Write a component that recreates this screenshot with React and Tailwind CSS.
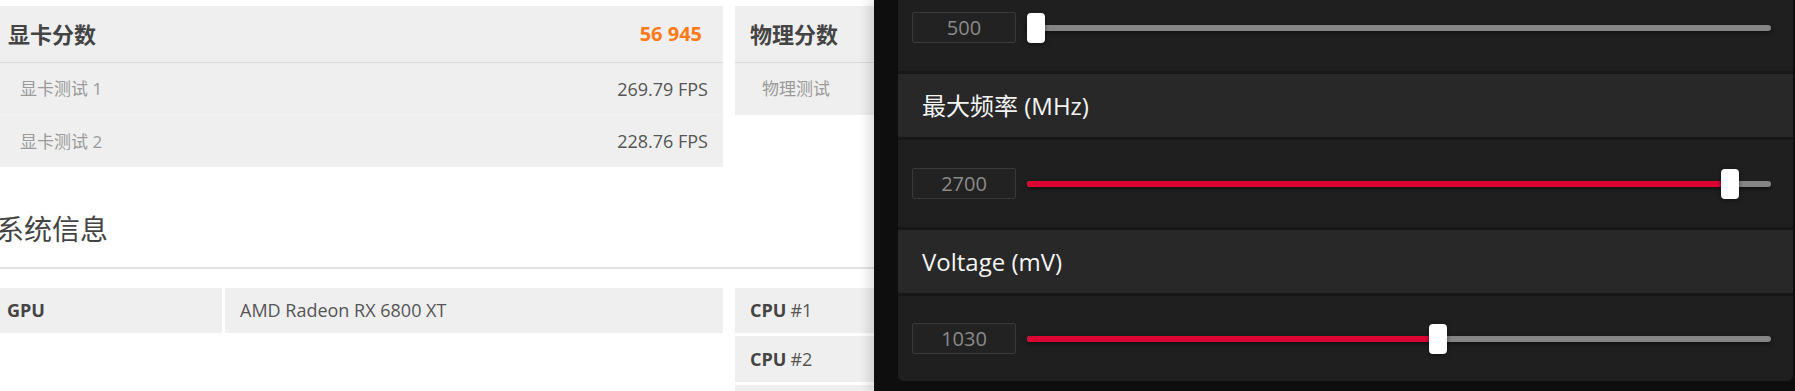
import React from 'react';

const font = { fontFamily: '"Open Sans", "Noto Sans CJK SC", sans-serif' };

const ScoreBox = ({ title, score, rows, width }) => (
  <div className={`${width} shrink-0 bg-[#efefef]`}>
    <div className="h-[57px] flex items-center justify-between pl-[15px] pr-[21px] border-b border-[#d9d9d9]">
      <span className="text-[22px] font-bold text-[#444]">{title}</span>
      {score && <span className="text-[20px] font-bold text-[#ff7a17]">{score}</span>}
    </div>
    {rows.map((r, i) => (
      <div
        key={r.label}
        className={`h-[52px] flex items-center justify-between pl-[27px] pr-[15px] ${i > 0 ? 'border-t border-[#f3f3f3]' : ''}`}
      >
        <span className="text-[17px] text-[#9a9a9a]">{r.label}</span>
        <span className="text-[18px] text-[#555]">{r.value}</span>
      </div>
    ))}
  </div>
);

const Slider = ({ value, frac }) => (
  <div className="h-full flex items-center pl-[14px] pr-[22px] gap-[11px]">
    <div className="w-[104px] h-[31px] shrink-0 flex items-center justify-center border border-[#3a3a3a] bg-[#222] rounded-[2px] text-[20px] text-[#8a8a8a]">
      {value}
    </div>
    <div className="relative flex-1 h-[6px] rounded-full bg-[#858585] shadow-[0_2px_4px_rgba(0,0,0,0.45)]">
      {/* filled part */}
      <div
        className="absolute left-0 top-0 h-full rounded-full bg-[#dc0433]"
        style={{ width: frac > 0 ? `calc((100% - 18px) * ${frac} + 9px)` : 0 }}
      />
      {/* thumb */}
      <div
        className="absolute top-1/2 -translate-y-1/2 w-[18px] h-[30px] rounded-[4px] bg-white shadow-[0_1px_4px_rgba(0,0,0,0.5)]"
        style={{ left: `calc((100% - 18px) * ${frac})` }}
      />
    </div>
  </div>
);

const Header = ({ children }) => (
  <div className="h-[63px] shrink-0 flex items-center pl-[24px] bg-[#282828] text-[24px] text-[#f4f4f4]">
    {children}
  </div>
);

export default function App() {
  return (
    <div className="w-[1795px] h-[391px] overflow-hidden flex bg-white" style={font}>
      {/* result page */}
      <div className="w-[874px] shrink-0 overflow-hidden">
        <div className="-ml-[7px] w-[1200px] pt-[6px]">
          <div className="flex items-start gap-[12px]">
            <ScoreBox
              width="w-[730px]"
              title="显卡分数"
              score="56 945"
              rows={[
                { label: '显卡测试 1', value: '269.79 FPS' },
                { label: '显卡测试 2', value: '228.76 FPS' },
              ]}
            />
            <ScoreBox
              width="w-[400px]"
              title="物理分数"
              rows={[{ label: '物理测试', value: '' }]}
            />
          </div>

          <h2 className="mt-[42px] h-[40px] leading-[40px] pl-[3px] text-[28px] text-[#444]">系统信息</h2>
          <div className="mt-[18px] h-[2px] bg-[#e2e2e2]" />

          <div className="mt-[19px] flex items-start gap-[12px]">
            <div className="w-[730px] shrink-0 flex gap-[3px]">
              <div className="w-[229px] h-[45px] flex items-center pl-[14px] bg-[#efefef] text-[18px] font-bold text-[#444]">GPU</div>
              <div className="flex-1 h-[45px] flex items-center pl-[15px] bg-[#efefef] text-[18px] text-[#555]">
                AMD Radeon RX 6800 XT
              </div>
            </div>
            <div className="w-[400px] flex flex-col gap-[3px]">
              <div className="h-[45px] flex items-center pl-[15px] bg-[#efefef] text-[18px] text-[#555]">
                <b className="text-[#444] mr-[4px]">CPU</b>#1
              </div>
              <div className="h-[46px] flex items-center pl-[15px] bg-[#efefef] text-[18px] text-[#555]">
                <b className="text-[#444] mr-[4px]">CPU</b>#2
              </div>
              <div className="h-[45px] bg-[#efefef]" />
            </div>
          </div>
        </div>
      </div>

      {/* tuning overlay */}
      <div className="relative z-10 flex-1 bg-[#0e0e0e] pl-[24px] pr-[2px] shadow-[-6px_0_10px_rgba(0,0,0,0.12)]">
        <div className="-mt-[16px] h-[397px] flex flex-col gap-[3px] bg-[#171717] rounded-b-[6px] overflow-hidden">
          <div className="h-[87px] shrink-0 bg-[#1f1f1f]">
            <Slider value="500" frac={0} />
          </div>
          <Header>最大频率 (MHz)</Header>
          <div className="h-[87px] shrink-0 bg-[#1f1f1f]">
            <Slider value="2700" frac={0.956} />
          </div>
          <Header>Voltage (mV)</Header>
          <div className="flex-1 bg-[#1f1f1f]">
            <Slider value="1030" frac={0.554} />
          </div>
        </div>
      </div>
    </div>
  );
}
